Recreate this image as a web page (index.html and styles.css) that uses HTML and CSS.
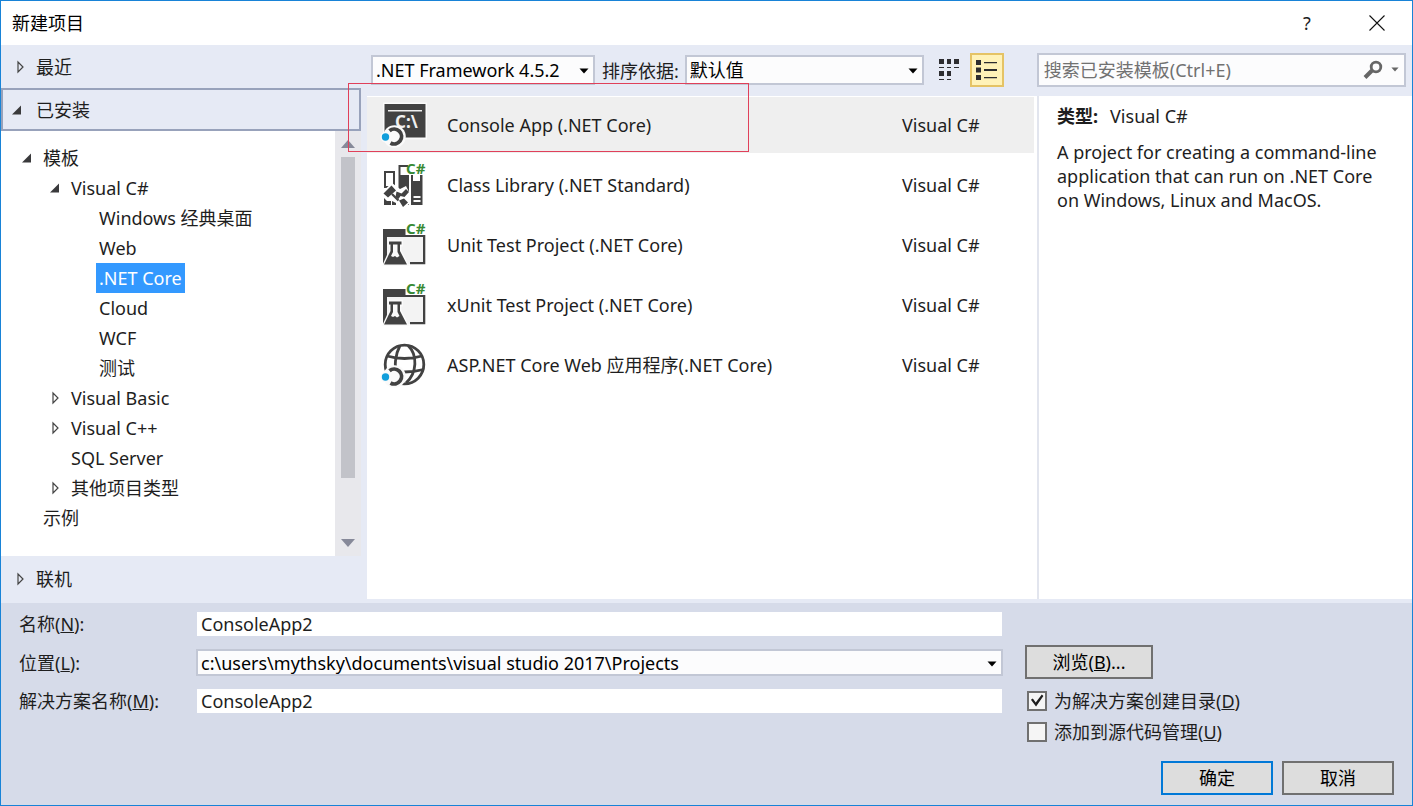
FILE: index.html
```html
<!DOCTYPE html>
<html lang="zh-CN">
<head>
<meta charset="utf-8">
<title>新建项目</title>
<link rel="stylesheet" href="styles.css">
</head>
<body>
<svg class="defs" aria-hidden="true">
  <symbol id="closed" viewBox="0 0 12 14"><path d="M4 2v10l5-5z" fill="none" stroke="#444" stroke-width="1.200"/></symbol>
  <symbol id="open" viewBox="0 0 12 14"><path d="M10 2.500v9H1z" fill="#3a3a3c"/></symbol>
  <symbol id="drop" viewBox="0 0 10 6"><path d="M0.500 0.500h9L5 5.500z" fill="currentColor"/></symbol>
  <symbol id="swirl" viewBox="0 0 48 48">
    <circle cx="14.500" cy="35.500" r="11.300" fill="#fafafa"/>
    <path d="M9.500 29.800A7.400 7.400 0 1 1 10.500 42" fill="none" stroke="#424242" stroke-width="3.800"/>
    <circle cx="5.500" cy="36" r="5.200" fill="#fafafa"/><circle cx="5.500" cy="36" r="3.700" fill="#119edb"/>
  </symbol>
  <symbol id="flask" viewBox="0 0 48 48">
    <path d="M3 8h42v35H3z" fill="#f3f3f3"/>
    <path d="M3 8h42v8H7v27H3zM43 13h2.300v30.300H30V41h13z" fill="#424242"/>
    <path d="M7.500 18.500h15.500v7h-1.500v4l8 15.500H2l7-15.500v-4H7.500z" fill="#fafafa"/>
    <path d="M9 20.500h12.500v3H20V30l7 13.500H4L10.500 30v-6.500H9z" fill="#424242"/>
    <path d="M13 23.500h4.500V31l2 4-2.500 1.500-2-1.500-2 1-2-1 2-4z" fill="#fafafa"/>
    <path d="M25.500 0H48v14H25.500z" fill="#fff"/>
  </symbol>
</svg>
<div class="window">
  <header class="titlebar">
    <h1>新建项目</h1>
    <button class="caption" aria-label="帮助">?</button>
    <button class="caption" aria-label="关闭"><svg width="16" height="16" viewBox="0 0 16 16"><path d="M.5.5l15 15M15.500.5l-15 15" stroke="#111" stroke-width="1.100"/></svg></button>
  </header>

  <div class="main">
    <nav class="side">
      <button class="section"><svg class="tw"><use href="#closed"/></svg>最近</button>
      <button class="section current"><svg class="tw"><use href="#open"/></svg>已安装</button>
      <div class="treebox">
        <ul class="tree">
          <li><div class="node"><svg class="tw"><use href="#open"/></svg><span>模板</span></div>
            <ul>
              <li><div class="node"><svg class="tw"><use href="#open"/></svg><span>Visual C#</span></div>
                <ul>
                  <li><div class="node"><span>Windows 经典桌面</span></div></li>
                  <li><div class="node"><span>Web</span></div></li>
                  <li><div class="node selected"><span>.NET Core</span></div></li>
                  <li><div class="node"><span>Cloud</span></div></li>
                  <li><div class="node"><span>WCF</span></div></li>
                  <li><div class="node"><span>测试</span></div></li>
                </ul>
              </li>
              <li><div class="node"><svg class="tw"><use href="#closed"/></svg><span>Visual Basic</span></div></li>
              <li><div class="node"><svg class="tw"><use href="#closed"/></svg><span>Visual C++</span></div></li>
              <li><div class="node"><span>SQL Server</span></div></li>
              <li><div class="node"><svg class="tw"><use href="#closed"/></svg><span>其他项目类型</span></div></li>
            </ul>
          </li>
          <li><div class="node"><span>示例</span></div></li>
        </ul>
        <div class="scroll">
          <svg width="14" height="8" viewBox="0 0 14 8"><path d="M0 8l7-8 7 8z" fill="#868999"/></svg>
          <div class="track"><div class="thumb"></div></div>
          <svg width="14" height="8" viewBox="0 0 14 8"><path d="M0 0l7 8 7-8z" fill="#868999"/></svg>
        </div>
      </div>
      <button class="section online"><svg class="tw"><use href="#closed"/></svg>联机</button>
    </nav>

    <div class="content">
      <div class="toolbar">
        <div class="drop framework"><select aria-label="目标框架"><option>.NET Framework 4.5.2</option></select><svg class="arrow"><use href="#drop"/></svg></div>
        <label for="sort">排序依据:</label>
        <div class="drop sort"><select id="sort"><option>默认值</option></select><svg class="arrow"><use href="#drop"/></svg></div>
        <div class="views">
          <button class="view" aria-label="小图标"><svg width="20" height="22" viewBox="0 0 20 22" fill="#2d2d30"><path d="M0 0h5v5H0zM8 0h4v5H8zM15 0h5v5h-5zM0 12h5v5H0zM8 12h4v5H8zM0 8h5v1H0zM8 8h4v1H8zM15 8h5v1h-5zM0 20h5v1H0zM8 20h4v1H8z"/></svg></button>
          <button class="view on" aria-label="列表"><svg width="22" height="20" viewBox="0 0 22 20" fill="#2d2d30"><path d="M0 0h5v5H0zM0 7.500h5v5H0zM0 15h5v5H0zM8 2h13v1.200H8zM8 9h13v2H8zM8 17h13v1.200H8z"/></svg></button>
        </div>
        <div class="search">
          <input type="text" aria-label="搜索" placeholder="搜索已安装模板(Ctrl+E)">
          <svg width="20" height="20" viewBox="0 0 20 20"><circle cx="13" cy="7" r="4.800" fill="none" stroke="#666" stroke-width="2.800"/><path d="M9 10.500L2 17.500" stroke="#666" stroke-width="4"/></svg>
          <svg class="more"><use href="#drop"/></svg>
        </div>
      </div>

      <div class="panes">
        <ul class="list">
          <li class="item chosen">
            <svg class="icon" viewBox="0 0 48 48"><path d="M3 1.500h44v37H3z" fill="#fafafa"/><path d="M4.500 3h41v33.500h-41z" fill="#424242"/><path d="M8 9.800h34" stroke="#f0f0f0" stroke-width="1.600"/><text x="15" y="27" class="prompt">C:\</text><use href="#swirl"/></svg>
            <span class="name">Console App (.NET Core)</span><span class="lang">Visual C#</span>
          </li>
          <li class="item">
            <svg class="icon" viewBox="0 0 48 48"><path d="M5 11h9v15H5z" fill="none" stroke="#424242" stroke-width="2"/><path d="M18.500 4H28v2h-7.500v8H29v30H18.500z" fill="#424242"/><path d="M31 14h2v6h7v-6h2.500v30H31z" fill="#424242"/><path d="M33.500 35h7v2h-7zM33.500 39h7v2h-7z" fill="#fafafa"/><path d="M12 22l8 6 6-3 3 6v12l-4 3H3V30z" fill="#fff"/><path d="M4 37l3 3h4v4H4zM12 40l4 2v2h-4z" fill="#424242"/><path d="M3.500 32.500l8-8 4.500 5-8 7zM11 33l8 6M16.500 30.500l5 2 4.500-4.500 3 3-4.500 5-4-1-2 3-3-2zM19 39.500l5-2 4 4-5 4.500z" fill="#424242"/><path d="M12 33l6.500 6.500" stroke="#424242" stroke-width="2.200"/><text x="26" y="13" class="sharp">C#</text></svg>
            <span class="name">Class Library (.NET Standard)</span><span class="lang">Visual C#</span>
          </li>
          <li class="item">
            <svg class="icon" viewBox="0 0 48 48"><use href="#flask"/><text x="26" y="13" class="sharp">C#</text></svg>
            <span class="name">Unit Test Project (.NET Core)</span><span class="lang">Visual C#</span>
          </li>
          <li class="item">
            <svg class="icon" viewBox="0 0 48 48"><use href="#flask"/><text x="26" y="13" class="sharp">C#</text></svg>
            <span class="name">xUnit Test Project (.NET Core)</span><span class="lang">Visual C#</span>
          </li>
          <li class="item">
            <svg class="icon" viewBox="0 0 48 48"><g fill="none" stroke="#424242" stroke-width="2.800"><circle cx="24.500" cy="23.500" r="19.300"/><path d="M20 4.500C15 14 14 26 17 32M28 4.500C38 14 37 32 26 42M7 15q17.500 5 35 0M5.500 28.500q19 5 38 0"/></g><use href="#swirl"/></svg>
            <span class="name">ASP.NET Core Web 应用程序(.NET Core)</span><span class="lang">Visual C#</span>
          </li>
        </ul>
        <aside class="details">
          <p class="kind"><b>类型:</b>Visual C#</p>
          <p>A project for creating a command-line application that can run on .NET Core on Windows, Linux and MacOS.</p>
        </aside>
        <div class="marker"></div>
      </div>
    </div>
  </div>

  <form class="bottom">
    <div class="fields">
      <label for="name">名称(<u>N</u>):</label>
      <input id="name" type="text" value="ConsoleApp2">
      <label for="place">位置(<u>L</u>):</label>
      <div class="drop place"><select id="place"><option>c:\users\mythsky\documents\visual studio 2017\Projects</option></select><svg class="arrow"><use href="#drop"/></svg></div>
      <label for="solution">解决方案名称(<u>M</u>):</label>
      <input id="solution" type="text" value="ConsoleApp2">
    </div>
    <div class="actions">
      <button type="button" class="btn browse">浏览(<u>B</u>)...</button>
      <label class="check"><input type="checkbox" checked>为解决方案创建目录(<u>D</u>)</label>
      <label class="check"><input type="checkbox">添加到源代码管理(<u>U</u>)</label>
      <div class="buttons">
        <button type="button" class="btn primary">确定</button>
        <button type="button" class="btn">取消</button>
      </div>
    </div>
  </form>
</div>
</body>
</html>
```
FILE: styles.css
```css
* { box-sizing: border-box; }

body {
  margin: 0;
  color: #1e1e1e;
  font: 18px/24px "Noto Sans", "Noto Sans CJK SC", sans-serif;
}

button, input, select { font: inherit; color: inherit; margin: 0; }
ul { list-style: none; margin: 0; padding: 0; }
h1, p { margin: 0; }

.defs { position: absolute; width: 0; height: 0; }

.window {
  display: flex;
  flex-direction: column;
  min-height: 100vh;
  border: 1px solid #1883d7;
  background: #e6eaf5;
}

.titlebar {
  display: flex;
  align-items: center;
  height: 44px;
  padding: 0 11px;
  background: #fff;
}
.titlebar h1 { flex: 1; font-size: 18px; font-weight: 400; color: #000; }
.caption {
  display: flex;
  align-items: center;
  justify-content: center;
  width: 48px;
  height: 32px;
  padding: 0;
  border: 0;
  background: none;
}
.caption + .caption { margin-left: 22px; }

.main { display: flex; flex: 1; }

/* Category tree */
.side {
  display: flex;
  flex-direction: column;
  width: 360px;
  margin-right: 6px;
}
.tw { flex: none; width: 12px; height: 14px; }
.section {
  display: flex;
  align-items: center;
  gap: 10px;
  height: 43px;
  padding: 0 13px;
  border: 0;
  background: none;
  text-align: left;
}
.section.current { padding: 0 11px 0 8px; gap: 13px; border: 2px solid #98a2bb; }
.section.online { height: 47px; padding-bottom: 2px; }

.treebox { display: flex; flex: 1; background: #fff; }
.tree { flex: 1; padding: 12px 0 23px 20px; }
.tree ul { padding-left: 28px; }
.node { display: flex; align-items: center; height: 30px; padding-left: 19px; }
.node .tw { margin-left: -19px; margin-right: 7px; }
.node span { padding: 3px; white-space: nowrap; }
.node.selected span { background: #3399ff; color: #fff; }

.scroll {
  display: flex;
  flex-direction: column;
  align-items: center;
  width: 26px;
  padding: 9px 0;
  background: #e8e8ec;
}
.track { flex: 1; padding: 9px 0; }
.thumb { width: 14px; height: 321px; background: #c2c3c9; }

/* Toolbar */
.content { display: flex; flex: 1; flex-direction: column; min-width: 0; }
.toolbar { display: flex; align-items: center; height: 51px; padding: 0 6px 2px 4px; }
.toolbar label { margin: 2px 6px 0 7px; white-space: nowrap; }

.drop { position: relative; height: 30px; border: 2px solid #c2c7d5; background: #fcfcfd; color: #000; }
.drop select {
  display: block;
  width: 100%;
  height: 100%;
  padding: 0 24px 0 3px;
  border: 0;
  background: none;
  appearance: none;
}
.arrow { position: absolute; right: 4px; top: 50%; width: 10px; height: 6px; margin-top: -2px; pointer-events: none; }
.framework { width: 224px; }
.sort { width: 239px; }

.views { display: flex; align-items: center; margin-left: 8px; gap: 4px; }
.view {
  display: flex;
  align-items: center;
  justify-content: center;
  width: 34px;
  height: 34px;
  padding: 0;
  border: 2px solid transparent;
  background: none;
}
.view.on { border-color: #e5c365; background: #fff2b8; }

.search {
  display: flex;
  flex: 1;
  align-items: center;
  height: 34px;
  margin-left: 33px;
  padding: 0 5px;
  border: 2px solid #c2c7d5;
  background: #fcfcfd;
}
.search input { flex: 1; min-width: 0; padding: 0; border: 0; outline: 0; background: none; }
.search input::placeholder { color: #717171; opacity: 1; }
.more { width: 8px; height: 5px; margin-left: 8px; color: #666; }

/* Template list and description */
.panes { position: relative; display: flex; flex: 1; margin-bottom: 4px; background: #fff; }
.list { flex: 1; padding: 1px 3px 0 0; border-right: 2px solid #e2e5ee; }
.item { display: flex; align-items: center; height: 56px; margin-bottom: 4px; padding-left: 13px; }
.item.chosen { background: #efefef; }
.icon { flex: none; width: 48px; height: 48px; }
.name { flex: 1; margin-left: 19px; }
.lang { width: 132px; }
.sharp { font: bold 15px "Noto Sans", sans-serif; fill: #388a34; }
.prompt { font: bold 17px "Noto Sans", sans-serif; fill: #f0f0f0; }

.details { width: 373px; padding: 8px 18px; }
.kind { margin-bottom: 12px; }
.kind b { margin-right: 12px; }

.marker {
  position: absolute;
  left: -19px;
  top: -13px;
  width: 401px;
  height: 69px;
  border: 1px solid #e0405a;
  pointer-events: none;
}

/* Project settings */
.bottom { display: flex; gap: 22px; padding: 8px 18px 10px; background: #d6dbe9; }
.fields {
  display: grid;
  flex: 1;
  grid-template-columns: 164px 1fr;
  grid-template-rows: 26px 27px 26px;
  align-content: start;
  align-items: center;
  column-gap: 13px;
  row-gap: 12px;
}
.fields label { white-space: nowrap; }
.fields input { width: 100%; height: 26px; padding: 0 4px; border: 1px solid #d6dbe9; background: #fff; }
.drop.place { height: 27px; }

.actions { display: flex; flex-direction: column; align-items: flex-start; width: 369px; padding-top: 34px; }
.btn { width: 112px; height: 34px; padding: 0; border: 2px solid #707070; background: #ddd; color: #000; }
.btn.browse { width: 128px; margin-bottom: 6px; }
.btn.primary { border-color: #0078d7; }
.check { display: flex; align-items: center; height: 31px; padding-left: 2px; }
.check input {
  appearance: none;
  width: 20px;
  height: 20px;
  margin-right: 7px;
  border: 2px solid #707070;
  background: #f5f5f5;
}
.check input:checked::before {
  content: "";
  display: block;
  width: 16px;
  height: 16px;
  background: #1e1e1e;
  clip-path: polygon(12% 46%, 24% 38%, 42% 62%, 80% 12%, 90% 22%, 44% 88%);
}
.buttons { display: flex; align-self: flex-end; gap: 9px; margin-top: 14px; }
```
